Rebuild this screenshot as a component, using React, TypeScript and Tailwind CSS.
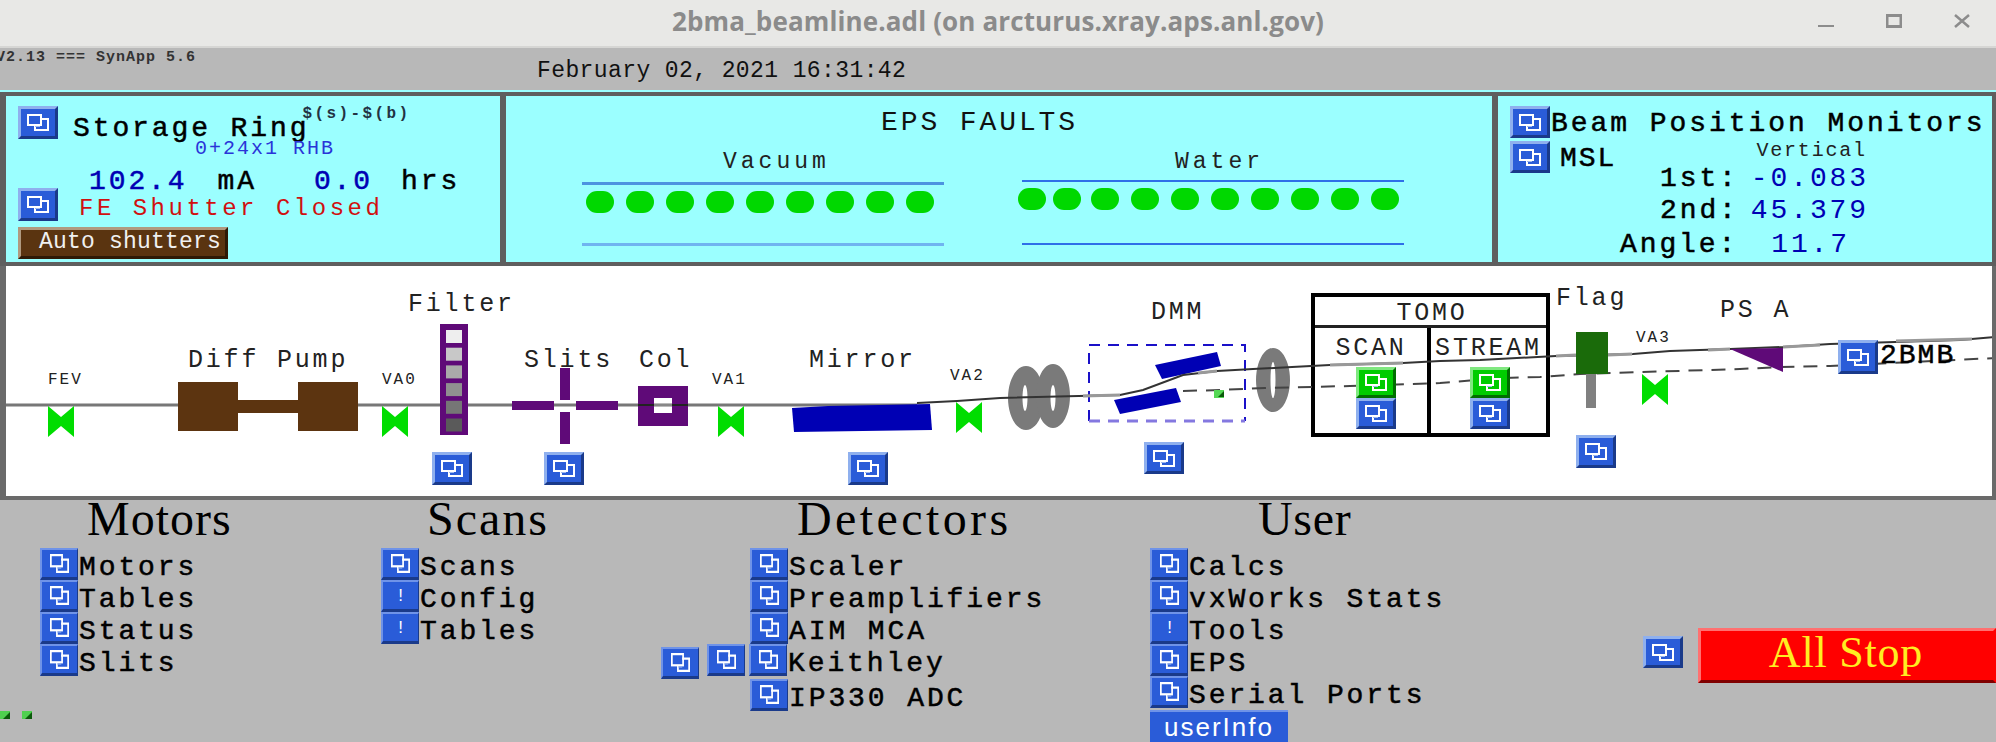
import React from "react";

const BIG = "text-[28px] leading-[30px] tracking-[2.9px] whitespace-pre";
const MED = "[-webkit-text-stroke:0.5px]";
const LBL = "text-[25px] leading-[28px] tracking-[2.8px] whitespace-pre text-[#222]";
const SMALL = "text-[16px] leading-[18px] tracking-[2px] whitespace-pre text-[#222]";
const ABS = "absolute";

function RelIcon({ className = "w-[22px] h-[17px]" }: { className?: string }) {
  return (
    <svg viewBox="0 0 22 17" preserveAspectRatio="none" className={className} fill="none">
      <path d="M13 5H21V16H8V11" stroke="#fff" strokeWidth="2" />
      <rect x="1" y="1" width="13" height="10" stroke="#fff" strokeWidth="2" />
      <rect x="8" y="12" width="5" height="1" fill="#9db8f0" />
    </svg>
  );
}

function Rel({ size = "w-[40px] h-[33px]", green = false, icon }: { size?: string; green?: boolean; icon?: string }) {
  const tone = green
    ? "bg-[#00cc00] border-t-[#80e880] border-l-[#80e880] border-b-[#006e00] border-r-[#006e00]"
    : "bg-[#2a5cd8] border-t-[#8fb0ee] border-l-[#8fb0ee] border-b-[#1a3a8a] border-r-[#1a3a8a]";
  return (
    <div className={`${size} ${tone} border-[3px] flex items-center justify-center shrink-0 box-border`}>
      <RelIcon className={icon} />
    </div>
  );
}

function MenuBtn({ bang = false }: { bang?: boolean }) {
  return (
    <div className="w-[38px] h-[32px] bg-[#2a5cd8] border-t-2 border-l-2 border-b-[3px] border-r border-t-[#6f93e8] border-l-[#6f93e8] border-b-[#1a3a8a] border-r-[#1a3a8a] flex items-center justify-center shrink-0 box-border">
      {bang ? (
        <span className="text-white text-[17px] leading-none font-['Liberation_Sans',sans-serif]">!</span>
      ) : (
        <RelIcon className="w-[19px] h-[19px]" />
      )}
    </div>
  );
}

function MenuRow({ label, bang = false }: { label: string; bang?: boolean }) {
  return (
    <div className="flex items-center h-[32px]">
      <MenuBtn bang={bang} />
      <span className={`${BIG} ${MED} ml-[1px] mt-[8px] text-black`}>{label}</span>
    </div>
  );
}

function Head({ children, className }: { children: string; className: string }) {
  return (
    <div
      className={`font-['Liberation_Serif',serif] text-[48px] leading-[37px] h-[48px] whitespace-pre text-black ${className}`}
    >
      {children}
    </div>
  );
}

function Dots({ n, className, tight = false }: { n: number; className: string; tight?: boolean }) {
  return (
    <div className={`flex ${className}`}>
      {Array.from({ length: n }).map((_, i) => (
        <div
          key={i}
          className={`w-[28px] h-[22px] rounded-[11px] bg-[#00d800] shrink-0 ${tight && i === 0 ? "mr-[-5px]" : ""} ${
            tight && i === 1 ? "mr-[-2px]" : ""
          }`}
        />
      ))}
    </div>
  );
}

function BeamDrawing() {
  const valve = (x: number, y: number) => (
    <polygon
      key={x}
      points={`${x},${y} ${x + 13},${y + 11} ${x + 26},${y} ${x + 26},${y + 31} ${x + 13},${y + 20} ${x},${y + 31}`}
      fill="#00dd00"
    />
  );
  const greys = ["#eeeeee", "#c8c8c8", "#aaaaaa", "#909090", "#767676", "#5a5a5a"];
  return (
    <svg viewBox="6 266 1986 230" className="absolute left-0 top-0 w-[1986px] h-[230px]">
      <path d="M6 405H917" stroke="#777" strokeWidth="3" fill="none" />
      <polygon points="792,408 828,406 930,404 932,430 794,432" fill="#0000b4" />
      {valve(48, 406)}
      {valve(382, 406)}
      {valve(718, 406)}
      {valve(956, 402)}
      {valve(1642, 374)}
      <g fill="#5c3410">
        <rect x="178" y="382" width="60" height="49" />
        <rect x="298" y="382" width="60" height="49" />
        <rect x="238" y="400" width="60" height="13" />
      </g>
      <rect x="440" y="324" width="28" height="111" fill="#5f0a78" />
      {greys.map((c, i) => (
        <rect key={c} x="446" y={330 + i * 17.7} width="16" height="13" fill={c} />
      ))}
      <g fill="#5f0a78">
        <rect x="512" y="401" width="42" height="9" />
        <rect x="576" y="401" width="42" height="9" />
        <rect x="560" y="368" width="10" height="32" />
        <rect x="560" y="412" width="10" height="32" />
        <path d="M638 386H688V426H638ZM654 398V413H672V398Z" fillRule="evenodd" />
      </g>
      <path d="M638 405H654M672 405H688" stroke="#222" strokeWidth="2" />
      <path d="M654 405H672" stroke="#888" strokeWidth="2" />
      <g fill="#7a7a7a">
        <path fillRule="evenodd" d="M1026 366a18 32 0 1 0 .01 0ZM1025 385a2.5 13 0 1 1-.01 0Z" />
        <path fillRule="evenodd" d="M1053 364a17 32 0 1 0 .01 0ZM1053 385a2.5 13 0 1 1-.01 0Z" />
        <path fillRule="evenodd" d="M1273 348a17 32 0 1 0 .01 0ZM1273 362a2.5 18 0 1 1-.01 0Z" />
      </g>
      <path d="M1089 421V345H1245V421" fill="none" stroke="#1a10c8" strokeWidth="2" strokeDasharray="11 8" />
      <path d="M1089 421H1245" fill="none" stroke="#8478e0" strokeWidth="3" strokeDasharray="11 8" />
      <polygon points="1155,365 1217,352 1221,366 1162,379" fill="#0000b4" />
      <polygon points="1114,400 1176,388 1181,402 1120,414" fill="#0000b4" />
      <polyline
        points="917,403 957,401 1000,398 1120,395 1143,390 1183,375 1217,371 1253,369 1292,367 1330,365 1403,363 1440,361 1480,360 1556,356 1633,354 1670,351 1730,349 1783,347 1830,344 1960,340 1996,337"
        fill="none"
        stroke="#333"
        strokeWidth="2"
      />
      <g stroke="#999" strokeWidth="3" fill="none">
        <path d="M1083 396L1120 395" />
        <path d="M1198 373L1217 371" />
        <path d="M1330 365L1403 363" />
        <path d="M1556 356L1576 355" />
        <path d="M1608 355L1632 354" />
        <path d="M1708 350L1730 349" />
        <path d="M1783 347L1820 345" />
        <path d="M1896 341L1972 339" />
      </g>
      <polyline
        points="1183,391 1220,390 1265,388 1350,386 1440,383 1500,378 1540,377 1580,374 1740,369 1780,367 1830,366 1996,358"
        fill="none"
        stroke="#444"
        strokeWidth="2"
        strokeDasharray="14 9"
      />
      <rect x="1214" y="390" width="10" height="8" fill="#55d855" />
      <polygon points="1218,397 1224,397 1224,391" fill="#0a5a0a" />
      <polygon points="1730,349 1783,348 1783,372" fill="#5f0a78" />
      <rect x="1576" y="332" width="32" height="42" fill="#1a6b0a" />
      <rect x="1586" y="374" width="10" height="34" fill="#808080" />
    </svg>
  );
}

function Tick() {
  return (
    <svg width="10" height="8" viewBox="0 0 10 8">
      <rect width="10" height="8" fill="#4fd04f" />
      <polygon points="3,8 10,8 10,1" fill="#0a5a0a" />
    </svg>
  );
}

export default function App() {
  return (
    <div className="w-[1996px] h-[742px] overflow-hidden bg-[#b8b8b8] flex flex-col font-['Liberation_Mono',monospace] text-black">
      {/* Window title */}
      <div className="h-[48px] shrink-0 bg-[#e8e8e6] border-b-2 border-[#d6d6d4] grid grid-cols-[1fr_auto_1fr] items-center">
        <div />
        <div className="font-['Open_Sans',sans-serif] font-bold text-[26px] tracking-[0.13px] text-[#8b8b8b] pb-[3px]">
          2bma_beamline.adl (on arcturus.xray.aps.anl.gov)
        </div>
        <div className="flex justify-end items-center gap-[52px] pr-[26px]">
          <svg width="16" height="16" viewBox="0 0 16 16"><rect x="0" y="10" width="16" height="2" fill="#8c8c8c" /></svg>
          <svg width="16" height="14" viewBox="0 0 16 14" className="mb-[4px]"><rect x="1" y="1.5" width="14" height="11" fill="none" stroke="#8c8c8c" strokeWidth="3" /></svg>
          <svg width="16" height="14" viewBox="0 0 16 14" className="mb-[4px]"><path d="M1 1L15 13M15 1L1 13" stroke="#8c8c8c" strokeWidth="2.5" /></svg>
        </div>
      </div>

      {/* Version and date */}
      <div className="h-[42px] shrink-0 flex">
        <div className="w-[537px] pt-[1px] text-[15px] leading-[18px] font-bold tracking-[1px] whitespace-pre text-[#333] ml-[-4px]">V2.13 === SynApp 5.6</div>
        <div className="text-[23px] leading-[26px] tracking-[0.4px] pt-[10px] whitespace-pre text-[#111] ml-[4px]">February 02, 2021 16:31:42</div>
      </div>

      {/* Status panels */}
      <div className="h-[176px] shrink-0 border-t-2 border-[#9bffff] bg-[#5f5f5f] flex pt-[4px] pb-[4px] pl-[6px] pr-[4px] gap-[6px]">
        <div className="w-[494px] bg-[#9bffff] flex flex-col pt-[10px] pl-[12px]">
          <div className="flex h-[33px]">
            <Rel />
            <div className={`${BIG} ${MED} ml-[15px] mt-[8px] text-black`}>Storage Ring</div>
            <div className="text-[16px] leading-[18px] tracking-[2.4px] font-bold ml-[-7px] mt-[-1px] whitespace-pre text-[#234]">$(s)-$(b)</div>
          </div>
          <div className="ml-[177px] text-[20px] leading-[19px] tracking-[2px] text-[#2a34d8] whitespace-pre">0+24x1 RHB</div>
          <div className="flex ml-[71px] mt-[9px] h-[30px]">
            <span className={`${BIG} ${MED} text-[#0000b4]`}>102.4</span>
            <span className={`${BIG} ${MED} ml-[30px]`}>mA</span>
            <span className={`${BIG} ${MED} text-[#0000b4] ml-[57px]`}>0.0</span>
            <span className={`${BIG} ${MED} ml-[28px]`}>hrs</span>
          </div>
          <div className="flex mt-[-9px] h-[33px]">
            <Rel />
            <span className="text-[24px] leading-[26px] tracking-[3.5px] text-[#d01010] ml-[21px] mt-[8px] whitespace-pre">FE Shutter Closed</span>
          </div>
          <div className="mt-[6px] w-[210px] h-[32px] box-border border-[3px] border-t-[#b09a80] border-l-[#b09a80] border-b-[#2e1a06] border-r-[#2e1a06] bg-[#5a3410] text-[#f0f0f0] text-[23px] leading-[24px] tracking-[0.2px] pl-[18px] whitespace-pre">Auto shutters</div>
        </div>

        <div className="w-[986px] bg-[#9bffff] flex flex-col">
          <div className={`${BIG} ml-[375px] mt-[12px] text-[#111]`}>EPS FAULTS</div>
          <div className="flex mt-[5px] ml-[76px] gap-[78px]">
            <div className="w-[362px]">
              <div className="text-[23px] leading-[30px] tracking-[4px] text-[#222] pl-[141px] pt-[4px]">Vacuum</div>
              <div className="h-[3px] mt-[5px] bg-[#4c94e0]" />
              <Dots n={9} className="gap-[12px] mt-[6px] ml-[4px]" />
              <div className="h-[3px] mt-[30px] bg-[#70b4f0]" />
            </div>
            <div className="w-[382px]">
              <div className="text-[23px] leading-[30px] tracking-[4px] text-[#222] pl-[153px] pt-[4px]">Water</div>
              <div className="h-[2px] mt-[3px] bg-[#2f6fe8]" />
              <Dots n={10} tight className="gap-[12px] mt-[6px] ml-[-4px]" />
              <div className="h-[2px] mt-[33px] bg-[#2f6fe8]" />
            </div>
          </div>
        </div>

        <div className="w-[494px] bg-[#9bffff] flex flex-col pt-[10px] pl-[12px]">
          <div className="flex h-[32px]">
            <Rel size="w-[40px] h-[32px]" />
            <span className={`${BIG} ${MED} ml-[1px] mt-[3px] tracking-[2.95px]`}>Beam Position Monitors</span>
          </div>
          <div className="flex mt-[3px] h-[32px]">
            <Rel size="w-[40px] h-[32px]" />
            <span className={`text-[28px] leading-[30px] tracking-[2px] ${MED} ml-[10px] mt-[3px] whitespace-pre`}>MSL</span>
            <span className="text-[20px] leading-[20px] tracking-[1.8px] ml-[140px] whitespace-pre text-[#222]">Vertical</span>
          </div>
          <div className="flex ml-[150px] h-[34px] mt-[-9px]">
            <span className={`${BIG} ${MED}`}>1st:</span>
            <span className={`${BIG} text-[#0000b4] ml-[12px]`}>-0.083</span>
          </div>
          <div className="flex ml-[150px] h-[34px]">
            <span className={`${BIG} ${MED}`}>2nd:</span>
            <span className={`${BIG} text-[#0000b4] ml-[12px]`}>45.379</span>
          </div>
          <div className="flex ml-[110px] h-[34px] mt-[1px]">
            <span className={`${BIG} ${MED}`}>Angle:</span>
            <span className={`${BIG} text-[#0000b4] ml-[33px]`}>11.7</span>
          </div>
        </div>
      </div>

      {/* Beamline synoptic */}
      <div className="h-[234px] shrink-0 bg-[#6a6a6a] pl-[6px] pr-[4px] pb-[4px]">
        <div className="relative h-[230px] bg-white overflow-hidden">
          <div className={`${ABS} left-[1305px] top-[27px] w-[239px] h-[144px] border-4 border-black box-border flex flex-col`}>
            <div className={`${LBL} h-[28px] leading-[33px] text-center pl-[3px]`}>TOMO</div>
            <div className="flex flex-1 border-t-[3px] border-[#222]">
              <div className="w-[112px] border-r-4 border-black box-content">
                <div className={`${LBL} h-[39px] leading-[42px] text-center`}>SCAN</div>
                <div className="relative z-10 ml-[41px] flex flex-col">
                  <Rel size="w-[40px] h-[31px]" green />
                  <Rel size="w-[40px] h-[31px]" />
                </div>
              </div>
              <div className="flex-1">
                <div className={`${LBL} h-[39px] leading-[42px] text-center`}>STREAM</div>
                <div className="relative z-10 ml-[39px] flex flex-col">
                  <Rel size="w-[40px] h-[31px]" green />
                  <Rel size="w-[40px] h-[31px]" />
                </div>
              </div>
            </div>
          </div>

          <BeamDrawing />

          <div className={`${ABS} ${LBL} left-[402px] top-[25px]`}>Filter</div>
          <div className={`${ABS} ${LBL} left-[182px] top-[81px]`}>Diff Pump</div>
          <div className={`${ABS} ${LBL} left-[518px] top-[81px]`}>Slits</div>
          <div className={`${ABS} ${LBL} left-[633px] top-[81px]`}>Col</div>
          <div className={`${ABS} ${LBL} left-[803px] top-[81px]`}>Mirror</div>
          <div className={`${ABS} ${LBL} left-[1145px] top-[33px]`}>DMM</div>
          <div className={`${ABS} ${LBL} left-[1550px] top-[19px]`}>Flag</div>
          <div className={`${ABS} ${LBL} left-[1714px] top-[31px]`}>PS A</div>
          <div className={`${ABS} ${SMALL} left-[42px] top-[105px]`}>FEV</div>
          <div className={`${ABS} ${SMALL} left-[376px] top-[105px]`}>VA0</div>
          <div className={`${ABS} ${SMALL} left-[706px] top-[105px]`}>VA1</div>
          <div className={`${ABS} ${SMALL} left-[944px] top-[101px]`}>VA2</div>
          <div className={`${ABS} ${SMALL} left-[1630px] top-[63px]`}>VA3</div>

          <div className={`${ABS} left-[426px] top-[186px]`}><Rel /></div>
          <div className={`${ABS} left-[538px] top-[186px]`}><Rel /></div>
          <div className={`${ABS} left-[842px] top-[186px]`}><Rel /></div>
          <div className={`${ABS} left-[1138px] top-[176px]`}><Rel size="w-[40px] h-[32px]" /></div>
          <div className={`${ABS} left-[1570px] top-[169px]`}><Rel /></div>
          <div className={`${ABS} left-[1832px] top-[74px]`}><Rel size="w-[40px] h-[34px]" /></div>
          <div className={`${ABS} ${BIG} ${MED} left-[1874px] top-[75px] tracking-[2px]`}>2BMB</div>
        </div>
      </div>

      {/* Menus */}
      <div className="flex-1 flex relative">
        <div className="w-[341px] ml-[40px] shrink-0">
          <Head className="ml-[47px] tracking-[1px]">Motors</Head>
          <MenuRow label="Motors" />
          <MenuRow label="Tables" />
          <MenuRow label="Status" />
          <MenuRow label="Slits" />
          <div className="flex ml-[-40px] mt-[35px] gap-[12px]">
            <Tick />
            <Tick />
          </div>
        </div>
        <div className="w-[369px] shrink-0">
          <Head className="ml-[46px] tracking-[2px]">Scans</Head>
          <MenuRow label="Scans" />
          <MenuRow label="Config" bang />
          <MenuRow label="Tables" bang />
        </div>
        <div className="w-[400px] shrink-0">
          <Head className="ml-[47px] tracking-[3.4px]">Detectors</Head>
          <MenuRow label="Scaler" />
          <MenuRow label="Preamplifiers" />
          <MenuRow label="AIM MCA" />
          <div className="flex items-start ml-[-89px]">
            <div className="mt-[3px] mr-[8px]"><MenuBtn /></div>
            <div className="mr-[4px]"><MenuBtn /></div>
            <MenuRow label="Keithley" />
          </div>
          <MenuRow label="IP330 ADC" />
        </div>
        <div className="w-[493px] shrink-0">
          <Head className="ml-[108px] tracking-[0.7px]">User</Head>
          <MenuRow label="Calcs" />
          <MenuRow label="vxWorks Stats" />
          <MenuRow label="Tools" bang />
          <MenuRow label="EPS" />
          <MenuRow label="Serial Ports" />
          <div className="w-[138px] h-[32px] mt-[2px] box-border bg-[#2a5cd8] border-t-2 border-[#6f93e8] text-white text-[26px] leading-[30px] text-center tracking-[2px] font-['Liberation_Sans',sans-serif]">userInfo</div>
        </div>
        <div className="flex-1 flex items-start pt-[136px]">
          <Rel size="w-[40px] h-[32px]" />
          <div className="ml-[15px] mt-[-8px] w-[298px] h-[55px] shrink-0 box-border bg-[#ff0000] border-[3px] border-t-[#ff7070] border-l-[#ff7070] border-b-[#800000] border-r-[#ff0000] text-[#ffee22] font-['Liberation_Serif',serif] text-[44px] leading-[44px] text-center tracking-[0.8px] pr-[2px]">All Stop</div>
        </div>
      </div>
    </div>
  );
}
